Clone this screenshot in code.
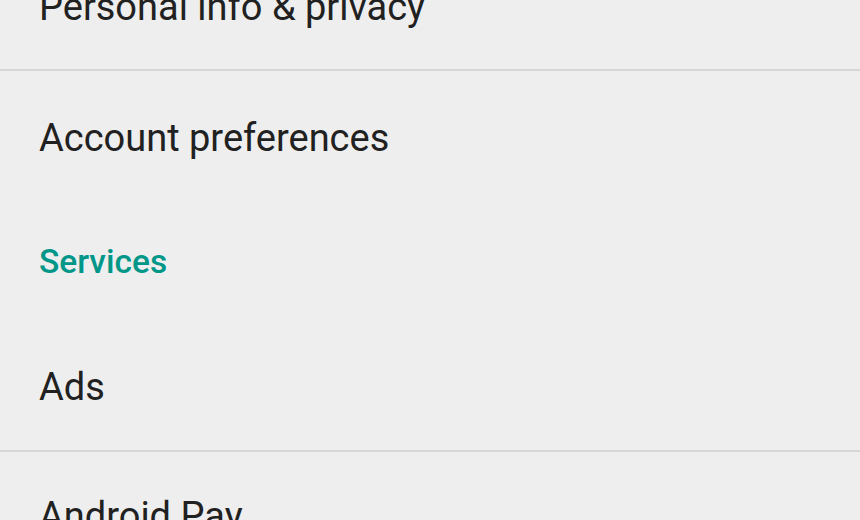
const Row = ({ children, className }) => (
  <div className={"pl-[39px] text-[38px] leading-[40px] text-[#212121] " + className}>{children}</div>
);

export default function App() {
  return (
    <div className="w-[860px] h-[520px] overflow-hidden bg-[#eeeeee] font-['Roboto',sans-serif]">
      <div className="-mt-[13px]">
        <Row className="pb-[42px]">Personal info &amp; privacy</Row>
        <div className="h-[2px] bg-[#d6d6d6]" />
        <Row className="pt-[47px]">Account preferences</Row>
        <div className="pl-[39px] pt-[88px] text-[33.5px] leading-[32px] font-medium text-[#009688]">Services</div>
        <Row className="pt-[89px] pb-[43px]">Ads</Row>
        <div className="h-[2px] bg-[#d6d6d6]" />
        <Row className="pt-[44px]">Android Pay</Row>
      </div>
    </div>
  );
}
